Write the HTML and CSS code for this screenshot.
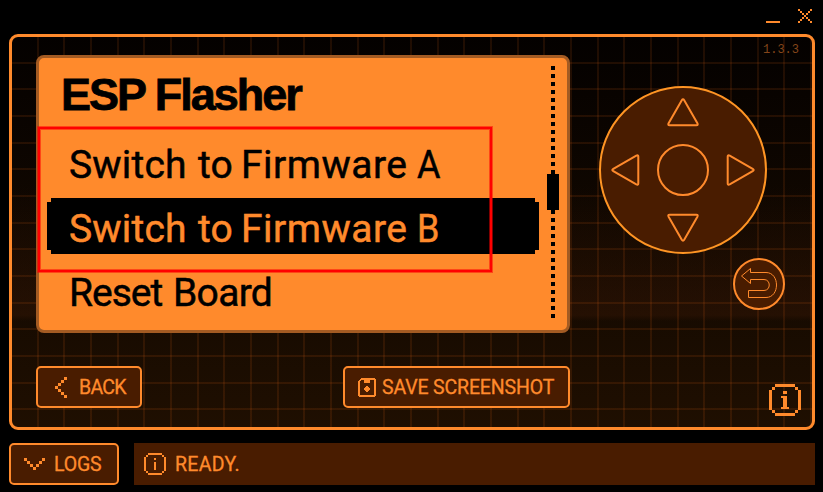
FILE: index.html
```
<!DOCTYPE html>
<html lang="en">
<head>
<meta charset="utf-8">
<title>Device control</title>
<link rel="stylesheet" href="styles.css">
</head>
<body>
<div class="window">
  <header class="titlebar">
    <svg class="min" width="14" height="14" viewBox="0 0 14 14" shape-rendering="crispEdges"><rect y="12" width="14" height="2"/></svg>
    <svg class="close" width="14" height="14" viewBox="0 0 7 7" shape-rendering="crispEdges"><path d="M0 0h1v1h-1zM1 1h1v1h-1zM2 2h1v1h-1zM3 3h1v1h-1zM4 4h1v1h-1zM5 5h1v1h-1zM6 6h1v1h-1zM6 0h1v1h-1zM5 1h1v1h-1zM4 2h1v1h-1zM2 4h1v1h-1zM1 5h1v1h-1zM0 6h1v1h-1z"/></svg>
  </header>
  <main class="frame">
    <section class="left">
      <div class="screen">
        <div class="menu">
          <h1 class="title">ESP Flasher</h1>
          <div class="item"><span class="word w1">Switch</span><span class="word w2">to</span><span class="word w3">Firmware</span><span class="word w6">A</span></div>
          <div class="item selected"><span class="word w1">Switch</span><span class="word w2">to</span><span class="word w3">Firmware</span><span class="word w6">B</span></div>
          <div class="item"><span class="word w4">Reset</span><span class="word w5">Board</span></div>
        </div>
        <div class="scroll"><div class="thumb"></div></div>
        <div class="highlight"></div>
      </div>
      <div class="actions">
        <button class="btn back"><svg width="12" height="21" viewBox="0 0 4 7" shape-rendering="crispEdges"><path d="M3 0h1v1h-1zM2 1h1v1h-1zM1 2h1v1h-1zM0 3h1v1h-1zM1 4h1v1h-1zM2 5h1v1h-1zM3 6h1v1h-1z"/></svg><span>BACK</span></button>
        <button class="btn save"><svg width="18" height="19" viewBox="0 0 18 19" shape-rendering="crispEdges"><path fill-rule="evenodd" d="M3 0h14v1h1v17h-1v1h-16v-1h-1v-15h1v-1h1v-1h1zM3 2v1h-1v14h14v-15h-4v3h-6v-3z"/><path d="M8 8h2v1h1v1h1v2h-1v1h-1v1h-2v-1h-1v-1h-1v-2h1v-1h1z"/></svg><span>SAVE SCREENSHOT</span></button>
      </div>
    </section>
    <aside class="right">
      <div class="version">1.3.3</div>
      <svg class="dpad" width="168" height="168" viewBox="0 0 168 168">
        <circle class="disc" cx="84" cy="84" r="83"/>
        <circle cx="84" cy="84" r="25"/>
        <path d="M82.8 14.3q1.2-2 2.4 0l13.2 23q1 2-1 2h-26.800q-2 0-1-2z"/>
        <path d="M82.800 153.700q1.200 2 2.400 0l13.200-23q1-2-1-2h-26.800q-2 0-1 2z"/>
        <path d="M14.300 82.800q-2 1.200 0 2.400l23 13.200q2 1 2-1v-26.800q0-2-2-1z"/>
        <path d="M153.700 82.800q2 1.200 0 2.400l-23 13.200q-2 1-2-1v-26.800q0-2 2-1z"/>
      </svg>
      <svg class="return" width="52" height="52" viewBox="0 0 52 52">
        <circle cx="26" cy="26" r="25"/>
        <path d="M8.500 18L17.500 10.500V14.500H33C47 14.500 47 39.500 33 39.500H15.500V32.500H31C38 32.500 38 21.500 31 21.500H17.500V25.500Z"/>
      </svg>
      <svg class="info" width="32" height="32" viewBox="0 0 32 32" shape-rendering="crispEdges"><path d="M6 0h20v3h-20zM6 29h20v3h-20zM0 6h3v20h-3zM29 6h3v20h-3zM3 3h3v3h-3zM26 3h3v3h-3zM3 26h3v3h-3zM26 26h3v3h-3zM14 7h4v3h-4zM12 12h6v11h2v2h-8v-2h2v-9h-2z"/></svg>
    </aside>
  </main>
  <footer class="bottom">
    <button class="btn logs"><svg width="21" height="12" viewBox="0 0 7 4" shape-rendering="crispEdges"><path d="M0 0h1v1h-1zM1 1h1v1h-1zM2 2h1v1h-1zM3 3h1v1h-1zM4 2h1v1h-1zM5 1h1v1h-1zM6 0h1v1h-1z"/></svg><span>LOGS</span></button>
    <div class="status"><svg width="22" height="22" viewBox="0 0 22 22" shape-rendering="crispEdges"><path d="M4 0h14v2h-14zM4 20h14v2h-14zM0 4h2v14h-2zM20 4h2v14h-2zM2 2h2v2h-2zM18 2h2v2h-2zM2 18h2v2h-2zM18 18h2v2h-2zM10 5h2v2h-2zM10 9h2v8h-2z"/></svg><span>READY.</span></div>
  </footer>
</div>
</body>
</html>
```
FILE: styles.css
```
* { box-sizing: border-box; }
:root { --orange: #ff8a2c; --brown: #491c00; }
body { margin: 0; background: #000; color: var(--orange); font-family: Roboto, "Liberation Sans", sans-serif; }
svg { display: block; flex: none; fill: var(--orange); }
.window { width: 823px; height: 492px; display: flex; flex-direction: column; padding: 0 8px 7px 9px; }
.titlebar { height: 34px; display: flex; justify-content: flex-end; gap: 18px; padding: 9px 3px 0 0; }
.frame {
  height: 396px; border: 3px solid var(--orange); border-radius: 9px;
  display: flex; justify-content: space-between; padding: 18px 11px 0 24px;
  background:
    repeating-linear-gradient(90deg, transparent 0 24.67px, rgba(255,110,20,.11) 24.67px 26.67px),
    repeating-linear-gradient(180deg, transparent 0 24.67px, rgba(255,110,20,.11) 24.67px 26.67px),
    linear-gradient(180deg, transparent 150px, rgba(58,24,6,.4) 278px, transparent 284px),
    linear-gradient(180deg, #040100, #1f0f01);
  background-origin: padding-box;
}
.left { width: 534px; }
.screen { position: relative; height: 278px; border: 3px solid #a35b23; border-radius: 8px; background: var(--orange); display: flex; justify-content: space-between; padding: 8px 8px 0; color: #000; }
.menu { width: 492px; }
.title { margin: 0 0 4px 14px; height: 64px; font: 700 45px/57px "Liberation Sans", sans-serif; letter-spacing: -2px; white-space: nowrap; -webkit-text-stroke: .8px; }
.item { height: 56px; margin-bottom: 8px; padding-left: 22px; display: flex; font-size: 39px; line-height: 63px; white-space: nowrap; -webkit-text-stroke: .5px; }
.selected { background: #000; color: var(--orange); clip-path: polygon(4px 0, 488px 0, 488px 4px, 492px 4px, 492px 52px, 488px 52px, 488px 56px, 4px 56px, 4px 52px, 0 52px, 0 4px, 4px 4px); }
.word { flex: none; }
.w1 { width: 129px; letter-spacing: .2px; }
.w2 { width: 43px; }
.w3 { width: 176px; letter-spacing: .5px; }
.w4 { width: 104px; letter-spacing: -1px; }
.w5 { letter-spacing: -.7px; }
.w6 { transform: scaleX(.92); transform-origin: left; }
.scroll { width: 12px; height: 252px; background: repeating-linear-gradient(180deg, #000 0 4px, transparent 4px 8px) 4px 0 / 4px 252px no-repeat; padding-top: 108px; }
.thumb { height: 36px; background: #000; }
.highlight { position: absolute; left: -1px; top: 69px; width: 454px; height: 145px; border: 2px solid #f00; box-shadow: 0 0 0 1px rgba(255,0,0,.5), inset 0 0 0 1px rgba(255,0,0,.5); }
.actions { display: flex; justify-content: space-between; margin-top: 33px; }
.btn { height: 42px; margin: 0; padding: 0; border: 2px solid var(--orange); border-radius: 5px; background: var(--brown); color: var(--orange); font: 400 19.500px/38px Roboto, sans-serif; display: flex; align-items: center; white-space: nowrap; }
.btn span { position: relative; top: 1px; -webkit-text-stroke: .3px; }
.back { width: 106px; padding-left: 17px; gap: 12px; letter-spacing: -.7px; }
.save { width: 227px; padding-left: 13px; gap: 6px; letter-spacing: -.15px; }
.logs { width: 110px; padding-left: 13px; gap: 9px; letter-spacing: -.2px; }
.right { width: 201px; display: flex; flex-direction: column; }
.version { height: 14px; margin-top: -12px; padding-right: 2px; text-align: right; font: 12px/14px "Liberation Mono", monospace; color: #84451a; }
.dpad { margin: 29px 0 0 -1px; }
.dpad circle, .dpad path { fill: none; stroke: var(--orange); stroke-width: 2; }
.dpad .disc { fill: var(--brown); stroke: #ff9524; }
.return { align-self: flex-end; margin: 4px 16px 0 0; }
.return circle { fill: var(--brown); stroke: var(--orange); stroke-width: 2; }
.return path { fill: none; stroke: var(--orange); }
.info { align-self: flex-end; margin: 74px 0 0; }
.bottom { margin-top: 13px; display: flex; justify-content: space-between; }
.status { width: 681px; height: 42px; background: var(--brown); display: flex; align-items: center; gap: 9px; padding-left: 10px; font-size: 19.500px; letter-spacing: .3px; -webkit-text-stroke: .3px; }
```
